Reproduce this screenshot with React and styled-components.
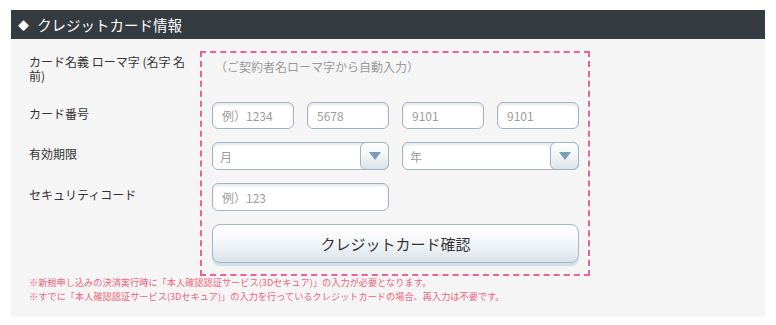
import React from 'react';
import styled, { createGlobalStyle } from 'styled-components';

const GlobalStyle = createGlobalStyle`
  body {
    margin: 0;
    background: #ffffff;
    font-family: "Noto Sans CJK JP", "Noto Sans", sans-serif;
    color: #333333;
  }
`;

const Section = styled.section`
  margin: 10px 0 0 11px;
  width: 754px;
`;

const Heading = styled.h2`
  margin: 0;
  height: 29px;
  display: flex;
  align-items: center;
  gap: 8px;
  padding-left: 7px;
  background-color: #343b41;
  color: #ffffff;
  font-size: 14.5px;
  font-weight: 400;
`;

const Diamond = styled.span`
  font-size: 11px;
`;

const Panel = styled.div`
  background-color: #f5f5f5;
  padding: 12px 0 14px 18px;
`;

const Form = styled.div`
  display: flex;
  align-items: flex-start;
`;

const LabelCol = styled.div`
  width: 171px;
  padding: 6px 10px 0 0;
  box-sizing: border-box;
  display: grid;
  grid-template-rows: 32px 27px 28px 28px;
  row-gap: 13px;
`;

const Label = styled.div`
  font-size: 12px;
  line-height: ${(p) => (p.tight ? '14px' : '17px')};
  margin-top: ${(p) => (p.tight ? '-2px' : '3px')};
  color: #333333;
`;

const FieldBox = styled.div`
  width: 390px;
  box-sizing: border-box;
  border: 2px dashed #ec6198;
  padding: 4px 9px 11px 10px;
  display: grid;
  grid-template-rows: 32px 27px 28px 28px 39px;
  row-gap: 13px;
`;

const AutoText = styled.div`
  font-size: 12px;
  line-height: 20px;
  color: #9a9a9a;
  padding-left: 3px;
`;

const Cols = styled.div`
  display: grid;
  grid-template-columns: repeat(${(p) => p.cols}, 1fr);
  column-gap: 13px;
`;

const TextInput = styled.input`
  box-sizing: border-box;
  width: 100%;
  height: 100%;
  margin: 0;
  border: 1px solid #9db5c6;
  border-radius: 6px;
  background: #ffffff;
  box-shadow: inset 0 2px 3px rgba(0, 0, 0, 0.1);
  padding: 0 9px;
  font-family: "Noto Sans CJK JP", "Noto Sans", sans-serif;
  font-size: 12px;
  color: #333333;
  outline: none;

  &::placeholder {
    color: #9c9c9c;
  }
`;

const Select = styled.div`
  box-sizing: border-box;
  height: 28px;
  display: flex;
  align-items: center;
  border: 1px solid #9db5c6;
  border-radius: 6px;
  background: #ffffff;
  box-shadow: inset 0 2px 3px rgba(0, 0, 0, 0.1);
`;

const SelectText = styled.span`
  flex: 1;
  padding-left: 7px;
  font-size: 12px;
  color: #9c9c9c;
`;

const ArrowBox = styled.span`
  box-sizing: border-box;
  width: 29px;
  height: 28px;
  margin: -1px -1px -1px 0;
  display: flex;
  align-items: center;
  justify-content: center;
  border: 1px solid #9db5c6;
  border-radius: 6px;
  background: linear-gradient(#ffffff, #f0f3f6 55%, #dae2e9);
`;

const ConfirmButton = styled.button`
  width: 100%;
  height: 39px;
  margin: 0;
  border: 1px solid #a2b8c8;
  border-radius: 8px;
  background: linear-gradient(#ffffff, #f4f7f9 45%, #dae3ea);
  box-shadow: 0 3px 1px rgba(170, 192, 210, 0.45);
  font-family: "Noto Sans CJK JP", "Noto Sans", sans-serif;
  font-size: 15px;
  color: #333333;
  cursor: pointer;
`;

const Notes = styled.div`
  margin-top: 0;
  font-size: 9.2px;
  line-height: 13.5px;
  color: #f0647a;
`;

function Arrow() {
  return (
    <svg width="12" height="8" viewBox="0 0 12 8">
      <path d="M0 0 H12 L6 8 Z" fill="#7a9cb5" />
    </svg>
  );
}

function Dropdown({ text }) {
  return (
    <Select>
      <SelectText>{text}</SelectText>
      <ArrowBox>
        <Arrow />
      </ArrowBox>
    </Select>
  );
}

export default function App() {
  const cardParts = ['例）1234', '5678', '9101', '9101'];

  return (
    <>
      <GlobalStyle />
      <Section>
        <Heading>
          <Diamond>◆</Diamond>
          クレジットカード情報
        </Heading>
        <Panel>
          <Form>
            <LabelCol>
              <Label tight>カード名義 ローマ字 (名字 名前)</Label>
              <Label>カード番号</Label>
              <Label>有効期限</Label>
              <Label>セキュリティコード</Label>
            </LabelCol>
            <FieldBox>
              <AutoText>（ご契約者名ローマ字から自動入力）</AutoText>
              <Cols cols={4}>
                {cardParts.map((p, i) => (
                  <TextInput key={i} placeholder={p} />
                ))}
              </Cols>
              <Cols cols={2}>
                <Dropdown text="月" />
                <Dropdown text="年" />
              </Cols>
              <Cols cols={2}>
                <TextInput placeholder="例）123" />
              </Cols>
              <ConfirmButton>クレジットカード確認</ConfirmButton>
            </FieldBox>
          </Form>
          <Notes>
            <div>※新規申し込みの決済実行時に「本人確認認証サービス(3Dセキュア)」の入力が必要となります。</div>
            <div>※すでに「本人確認認証サービス(3Dセキュア)」の入力を行っているクレジットカードの場合、再入力は不要です。</div>
          </Notes>
        </Panel>
      </Section>
    </>
  );
}
